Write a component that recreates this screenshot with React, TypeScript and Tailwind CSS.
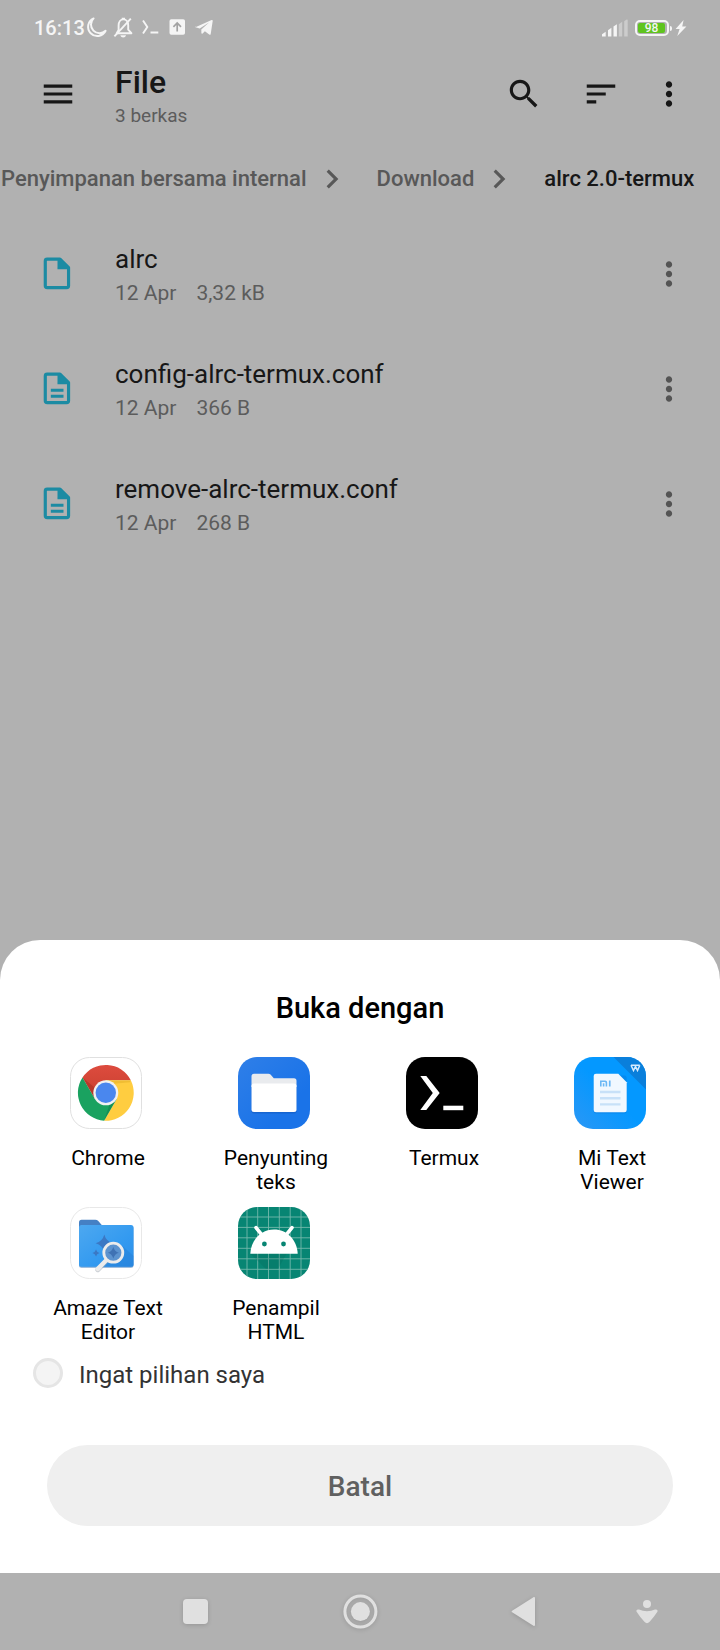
import type { ReactNode } from "react";

function MenuIcon() {
  return (
    <svg viewBox="0 0 24 24" className="size-[38px]" fill="currentColor" aria-hidden="true">
      <path d="M3 18h18v-2H3v2zm0-5h18v-2H3v2zm0-7v2h18V6H3z" />
    </svg>
  );
}

function SearchIcon() {
  return (
    <svg viewBox="0 0 24 24" className="size-[38px]" fill="currentColor" aria-hidden="true">
      <path d="M15.5 14h-.79l-.28-.27C15.41 12.59 16 11.11 16 9.5 16 5.91 13.09 3 9.5 3S3 5.91 3 9.5 5.91 16 9.5 16c1.61 0 3.09-.59 4.23-1.57l.27.28v.79l5 4.99L20.49 19l-4.99-5zm-6 0C7.01 14 5 11.99 5 9.5S7.01 5 9.5 5 14 7.01 14 9.5 11.99 14 9.5 14z" />
    </svg>
  );
}

function SortIcon() {
  return (
    <svg viewBox="0 0 24 24" className="size-[38px]" fill="currentColor" aria-hidden="true">
      <path d="M3 18h6v-2H3v2zM3 6v2h18V6H3zm0 7h12v-2H3v2z" />
    </svg>
  );
}

function MoreIcon() {
  return (
    <svg viewBox="0 0 24 24" className="size-[38px]" fill="currentColor" aria-hidden="true">
      <path d="M12 8c1.1 0 2-.9 2-2s-.9-2-2-2-2 .9-2 2 .9 2 2 2zm0 2c-1.1 0-2 .9-2 2s.9 2 2 2 2-.9 2-2-.9-2-2-2zm0 6c-1.1 0-2 .9-2 2s.9 2 2 2 2-.9 2-2-.9-2-2-2z" />
    </svg>
  );
}

function ChevronIcon() {
  return (
    <svg viewBox="0 0 24 24" className="size-[38px] shrink-0" fill="currentColor" aria-hidden="true">
      <path d="M10 6 8.59 7.41 13.17 12l-4.58 4.59L10 18l6-6z" />
    </svg>
  );
}

function FileIcon({ lines }: { lines: boolean }) {
  return (
    <svg viewBox="0 0 24 24" className="size-[38px] shrink-0 text-[#1c8ba3]" aria-hidden="true">
      <path
        d="M5.800 2.600h8.100L19.300 8v11.400q0 1.200-1.200 1.200H5.800q-1.200 0-1.200-1.200V3.800q0-1.200 1.200-1.200z"
        fill="none"
        stroke="currentColor"
        strokeWidth="2"
        strokeLinejoin="round"
      />
      <path d="M12.300 2.200h2l5.400 5.400V9h-7.400z" fill="currentColor" />
      {lines && <path d="M8.100 12.800h8M8.100 16.600h8" stroke="currentColor" strokeWidth="2" />}
    </svg>
  );
}

function StatusBar() {
  return (
    <div className="flex h-14 items-center justify-between pr-[33px] pl-[34px] text-[#f5f5f5]">
      <div className="flex items-center">
        <span className="text-xl font-medium leading-6">16:13</span>
        <div className="flex items-center gap-[3px]">
          <svg viewBox="0 0 24 24" className="size-6" fill="none" stroke="currentColor" strokeWidth="2" strokeLinejoin="round" aria-hidden="true">
            <path d="M8.600 2.400A9.200 9.200 0 1 0 20.600 14.800 8.400 8.400 0 0 1 8.600 2.400z" />
          </svg>
          <svg viewBox="0 0 24 24" className="size-6" fill="none" stroke="currentColor" strokeWidth="1.900" strokeLinejoin="round" aria-hidden="true">
            <path d="M4.700 17.200 6.600 14V9.500C6.600 6 8.600 3.400 11.400 3.400S16.200 6 16.200 9.500v4.200l3.200 3.500H4.700zM9.700 2.600h3.400" />
            <path d="M2.400 20.300 18.800 2.600" />
            <path d="M8.400 19.300H14c-.4 1.400-1.400 2.200-2.800 2.200s-2.400-.8-2.800-2.200z" fill="currentColor" stroke="none" />
          </svg>
          <svg viewBox="0 0 24 24" className="size-6" fill="none" stroke="currentColor" strokeWidth="1.900" aria-hidden="true">
            <path d="m4 4.500 4.300 6.500L4 17.500M11.500 16.500h7.800" />
          </svg>
          <svg viewBox="0 0 24 24" className="size-6" aria-hidden="true">
            <rect x="3.500" y="3.200" width="15.500" height="15.500" rx="1.800" fill="currentColor" />
            <path d="M11.200 15.500V7.500M7.400 10.800 11.200 7l3.800 3.800" fill="none" stroke="#a3a3a3" strokeWidth="1.700" />
          </svg>
          <svg viewBox="0 0 24 24" className="size-6" fill="currentColor" aria-hidden="true">
            <path d="M2.400 11.200 18.600 4c.8-.3 1.200.1 1.100.9l-2 13c-.2.900-.8 1.100-1.500.6l-4.300-3.300-2.300 2.300c-.6.600-1.100.4-1.200-.4l-.1-3.600 7.700-7-9.300 6-4.200-1.200c-.6-.2-.7-.8-.1-1.100z" />
          </svg>
        </div>
      </div>
      <div className="flex items-center">
        <svg viewBox="0 0 27 18" className="mr-[6px] h-[18px] w-[27px]" fill="currentColor" aria-hidden="true">
          <path d="M0 17.500v-2.200l3.700-2.600v4.800zM6 17.500v-6.300l3.400-2.400v8.700zM11.500 17.500V7.600l3.400-2.400v12.300z" />
          <path d="M16.800 17.500V5.200l3.400-2.500v14.800zM22.200 17.500V2.200l2-1.500q1.500-.6 1.500.6v16.200z" opacity=".4" />
        </svg>
        <div className="flex items-center gap-px">
          <div className="flex h-4 w-[34px] rounded-[5px] border-2 border-current p-px">
            <span className="flex w-[27px] items-center justify-center rounded-xs bg-[#5fc41f] text-xs font-medium leading-none">
              98
            </span>
          </div>
          <span className="h-[5px] w-[2px] rounded-r-sm bg-current" />
        </div>
        <svg viewBox="0 0 12 16" className="ml-[3px] h-4 w-3" fill="currentColor" aria-hidden="true">
          <path d="M8.600 0 .6 9h4L2.300 16 11.400 6.400H7.200z" />
        </svg>
      </div>
    </div>
  );
}

function IconButton({ label, children, className = "" }: { label: string; children: ReactNode; className?: string }) {
  return (
    <button type="button" aria-label={label} className={`shrink-0 ${className}`}>
      {children}
    </button>
  );
}

function Header() {
  return (
    <header className="flex h-[76px] items-center pr-8 pl-[39px] text-[#171717]">
      <IconButton label="Menu">
        <MenuIcon />
      </IconButton>
      <div className="ml-[38px] flex-1 pt-2">
        <h1 className="text-[32px] font-medium leading-9">File</h1>
        <p className="text-[19px] leading-8 text-[#5c5c5c]">3 berkas</p>
      </div>
      <div className="flex items-center">
        <IconButton label="Cari">
          <SearchIcon />
        </IconButton>
        <IconButton label="Urutkan" className="ml-[39px]">
          <SortIcon />
        </IconButton>
        <IconButton label="Opsi lainnya" className="ml-[30px]">
          <MoreIcon />
        </IconButton>
      </div>
    </header>
  );
}

function Breadcrumbs() {
  return (
    <nav aria-label="Lokasi" className="mt-6 flex h-[46px] items-center whitespace-nowrap pl-px text-[22px] font-medium leading-7 text-[#585858]">
      <a href="#internal">Penyimpanan bersama internal</a>
      <span className="mr-[26px] ml-[6px] flex">
        <ChevronIcon />
      </span>
      <a href="#download">Download</a>
      <span className="mr-[26px] ml-[6px] flex">
        <ChevronIcon />
      </span>
      <a href="#alrc" aria-current="page" className="text-[#171717]">
        alrc 2.0-termux
      </a>
    </nav>
  );
}

const files = [
  { name: "alrc", date: "12 Apr", size: "3,32 kB", lines: false },
  { name: "config-alrc-termux.conf", date: "12 Apr", size: "366 B", lines: true },
  { name: "remove-alrc-termux.conf", date: "12 Apr", size: "268 B", lines: true },
];

function FileList() {
  return (
    <ul className="mt-[14px]">
      {files.map((file) => (
        <li key={file.name} className="flex h-[115px] items-center pr-8 pl-[38px]">
          <FileIcon lines={file.lines} />
          <div className="ml-[39px] min-w-0 flex-1 pt-[6px]">
            <p className="truncate text-[26px] leading-8 text-[#171717]">{file.name}</p>
            <p className="flex gap-5 text-[21px] leading-9 text-[#5c5c5c]">
              <span>{file.date}</span>
              <span>{file.size}</span>
            </p>
          </div>
          <IconButton label={`Opsi ${file.name}`} className="text-[#545454]">
            <MoreIcon />
          </IconButton>
        </li>
      ))}
    </ul>
  );
}

function AppSvg({ children }: { children: ReactNode }) {
  return (
    <svg viewBox="0 0 72 72" className="mr-1 size-[72px]" aria-hidden="true">
      {children}
    </svg>
  );
}

function ChromeLogo() {
  return (
    <AppSvg>
      <defs>
        <linearGradient id="chrome-red" x1="0" y1="0" x2="0" y2="1">
          <stop offset="0" stopColor="#dd4b3e" />
          <stop offset="1" stopColor="#c8402f" />
        </linearGradient>
      </defs>
      <rect x=".5" y=".5" width="71" height="71" rx="19" fill="#fff" stroke="#e0e0e0" />
      <g transform="translate(35.800 35.800)">
        <path d="M-23.300-15.400A28 28 0 0 1 25-12.500L0-12.500 0 0-10.800 6.250z" fill="url(#chrome-red)" />
        <path d="M25-12.500A28 28 0 0 1-1.700 27.900L10.800 6.250 0 0 0-12.500z" fill="#ffcd40" />
        <path d="M-1.700 27.900A28 28 0 0 1-23.300-15.400L-10.800 6.250 0 0 10.800 6.250z" fill="#1aa260" />
        <path d="M0-12.500H25L24-10.500 8-9z" fill="#d9a520" opacity=".4" />
        <path d="M-1.700 27.900 10.800 6.250 4 11z" fill="#0d7a45" opacity=".45" />
        <path d="M-23.300-15.400-10.800 6.250-11-5z" fill="#96271b" opacity=".4" />
        <circle r="12.500" fill="#f1f1f1" />
        <circle r="10.200" fill="#4a87ee" />
      </g>
    </AppSvg>
  );
}

function FolderLogo() {
  return (
    <AppSvg>
      <defs>
        <linearGradient id="folder-bg" x1="0" y1="0" x2=".7" y2=".7">
          <stop offset="0" stopColor="#2f7fe8" />
          <stop offset="1" stopColor="#1a73e8" />
        </linearGradient>
      </defs>
      <rect width="72" height="72" rx="19" fill="url(#folder-bg)" />
      <rect x="13.500" y="28" width="45" height="28.500" rx="2.500" fill="#0f56b8" opacity=".5" />
      <path d="M13.500 30V19.200q0-2.500 2.500-2.500h14.500q1.200 0 2 .9l3.300 3.600H56q2.500 0 2.500 2.500V30z" fill="#e9ebee" />
      <rect x="13.500" y="26.500" width="45" height="28.500" rx="2.500" fill="#fff" />
    </AppSvg>
  );
}

function TermuxLogo() {
  return (
    <AppSvg>
      <rect width="72" height="72" rx="19" fill="#000" />
      <path d="M14.300 19h6L33.700 36 20.300 53h-6L26.800 36z" fill="#fff" />
      <rect x="37.300" y="48.700" width="20" height="4.500" fill="#fff" />
    </AppSvg>
  );
}

function MiTextLogo() {
  return (
    <AppSvg>
      <defs>
        <clipPath id="mi-clip">
          <rect width="72" height="72" rx="19" />
        </clipPath>
        <linearGradient id="mi-bg" x1="1" y1="0" x2="0" y2="1">
          <stop offset=".5" stopColor="#0498ff" />
          <stop offset="1" stopColor="#2b97f5" />
        </linearGradient>
      </defs>
      <g clipPath="url(#mi-clip)">
        <rect width="72" height="72" fill="url(#mi-bg)" />
        <path d="M39.500 0H72v32.500z" fill="#0a7fdb" />
        <path d="m57 8.200 2.500 5.300 2-4 2 4 2.300-5.300M57 8.200h8.800" fill="none" stroke="#d6ecff" strokeWidth="1.500" />
        <rect x="19.700" y="18.500" width="33" height="38" rx="2.500" fill="#0a6fd0" opacity=".35" />
        <path d="M22 16.700h22.300l8.400 8.600V53q0 2.300-2.300 2.300H22q-2.300 0-2.300-2.300V19q0-2.300 2.300-2.300z" fill="#f1f8ff" />
        <g fill="#6cb8f5">
          <path d="M26 29.500v-6h5.200q2 0 2 2v4h-1.600v-3.600q0-.8-.8-.8h-3.200v4.400z" />
          <rect x="28.800" y="26.300" width="1.600" height="3.200" />
          <rect x="34.900" y="23.500" width="1.700" height="6" />
        </g>
        <path d="M26 35h20.500M26 41.200h20.500M26 47.400h20.500" stroke="#c8e1f8" strokeWidth="2.400" />
      </g>
    </AppSvg>
  );
}

function AmazeLogo() {
  return (
    <AppSvg>
      <defs>
        <linearGradient id="amaze-front" x1="0" y1="0" x2="1" y2="1">
          <stop offset="0" stopColor="#4da8f0" />
          <stop offset=".6" stopColor="#339af0" />
          <stop offset="1" stopColor="#2c8ee8" />
        </linearGradient>
      </defs>
      <rect x=".5" y=".5" width="71" height="71" rx="19" fill="#fff" stroke="#e8e8e8" />
      <path d="M9 30V15.200q0-2.500 2.500-2.500h13.800q1.800 0 3 1.300l5.200 6V30z" fill="#4580c4" />
      <rect x="9" y="19" width="54.500" height="41.700" rx="2.500" fill="#2b6fb8" opacity=".6" />
      <rect x="9" y="18" width="54.500" height="41.700" rx="2.500" fill="url(#amaze-front)" />
      <path d="M52 38.500 63.500 49v8.200q0 2.500-2.500 2.500H34z" fill="#2378cf" opacity=".35" />
      <path d="M34.300 27.500q1.700 6.800 8.700 8.800-7 2-8.700 8.800-1.700-6.800-8.700-8.800 7-2 8.700-8.800z" fill="#3b78c4" />
      <path d="M26 42.500q.8 2.700 3.500 3.500-2.700.8-3.500 3.500-.8-2.700-3.500-3.500 2.700-.8 3.500-3.500z" fill="#3b78c4" />
      <path d="M36 54.200 27.800 62.700" stroke="#9aa3ad" strokeWidth="5" strokeLinecap="round" opacity=".5" />
      <path d="M36 53.500 27.800 61.900" stroke="#ececec" strokeWidth="4.400" strokeLinecap="round" />
      <circle cx="43.300" cy="45.700" r="9.500" fill="#5c93cf" stroke="#ececec" strokeWidth="2.800" />
      <path d="M43.300 40q1.300 4.500 5.500 5.700-4.200 1.200-5.500 5.700-1.300-4.500-5.500-5.700 4.200-1.200 5.500-5.700z" fill="#3f72b4" />
    </AppSvg>
  );
}

function AndroidLogo() {
  return (
    <AppSvg>
      <defs>
        <clipPath id="android-clip">
          <rect width="72" height="72" rx="19" />
        </clipPath>
      </defs>
      <g clipPath="url(#android-clip)">
        <rect width="72" height="72" fill="#078573" />
        <path
          d="M9 0v72M19.700 0v72M30.500 0v72M41.300 0v72M52.200 0v72M63 0v72M0 10h72M0 20.400h72M0 30.800h72M0 41.300h72M0 51.800h72M0 62.300h72"
          stroke="#74b8ac"
          strokeWidth=".9"
        />
        <path d="M12.500 46.700h36L40 62H28z" fill="#05604f" opacity=".2" />
        <path d="M12.300 46.700C13 33 23 22.600 36 22.600S59 33 59.700 46.700z" fill="#fff" />
        <path d="m18 20.600 6.500 8M54 20.600l-6.500 8" stroke="#fff" strokeWidth="3.600" strokeLinecap="round" />
        <circle cx="26.400" cy="37" r="2.400" fill="#078573" />
        <circle cx="45.500" cy="37" r="2.400" fill="#078573" />
      </g>
    </AppSvg>
  );
}

const apps = [
  { name: "Chrome", logo: <ChromeLogo /> },
  { name: "Penyunting teks", logo: <FolderLogo /> },
  { name: "Termux", logo: <TermuxLogo /> },
  { name: "Mi Text Viewer", logo: <MiTextLogo /> },
  { name: "Amaze Text Editor", logo: <AmazeLogo /> },
  { name: "Penampil HTML", logo: <AndroidLogo /> },
];

function OpenWithSheet() {
  return (
    <section role="dialog" aria-labelledby="sheet-title" className="rounded-t-[40px] bg-white pt-[50px] pb-[47px]">
      <h2 id="sheet-title" className="text-center text-[29px] font-medium leading-9 text-black">
        Buka dengan
      </h2>
      <div className="mt-[31px] grid grid-cols-4 px-6">
        {apps.map((app) => (
          <button key={app.name} type="button" className="flex h-[150px] flex-col items-center">
            {app.logo}
            <span className="mt-[17px] w-[120px] text-center text-[21px] leading-6 text-black">{app.name}</span>
          </button>
        ))}
      </div>
      <div className="flex h-8 items-center pl-[33px]">
        <input
          id="remember"
          type="checkbox"
          className="size-[30px] appearance-none rounded-full border-3 border-[#e5e5e5] bg-[#f4f4f4] checked:bg-[#1a73e8]"
        />
        <label htmlFor="remember" className="pt-1 pl-4 text-2xl leading-8 text-[#333]">
          Ingat pilihan saya
        </label>
      </div>
      <div className="mt-14 px-[47px]">
        <button type="button" className="h-[81px] w-full rounded-full bg-[#efefef] pt-[2px] text-[28px] font-medium text-[#606060]">
          Batal
        </button>
      </div>
    </section>
  );
}

function NavigationBar() {
  return (
    <nav aria-label="Navigasi sistem" className="grid h-[77px] grid-cols-[1fr_164px_164px_164px_1fr] items-center justify-items-center text-[#e0e0e0]">
      <span />
      <IconButton label="Aplikasi terbaru">
        <svg viewBox="0 0 40 40" className="size-10 drop-shadow-sm" fill="currentColor" aria-hidden="true">
          <rect x="7" y="7" width="25" height="25" rx="4" />
        </svg>
      </IconButton>
      <IconButton label="Beranda">
        <svg viewBox="0 0 40 40" className="size-10 drop-shadow-sm" aria-hidden="true">
          <circle cx="20.400" cy="19.600" r="15.500" fill="none" stroke="currentColor" strokeWidth="3" />
          <circle cx="20.400" cy="19.600" r="9.500" fill="currentColor" />
        </svg>
      </IconButton>
      <IconButton label="Kembali">
        <svg viewBox="0 0 40 40" className="size-10 drop-shadow-sm" fill="currentColor" stroke="currentColor" strokeWidth="2" strokeLinejoin="round" aria-hidden="true">
          <path d="M8.700 19.500 30 6v27z" />
        </svg>
      </IconButton>
      <IconButton label="Sembunyikan" className="pr-8">
        <svg viewBox="0 0 40 40" className="size-10" fill="currentColor" aria-hidden="true">
          <circle cx="20" cy="12" r="4" />
          <path d="M12 17.600q3.600 1.700 8 1.700t8-1.700c2-.7 3.300 1 2.200 2.500q-3.600 5.600-7.600 9.700-2.600 2.800-5.200 0-4-4.100-7.600-9.700c-1.100-1.500.2-3.200 2.200-2.500z" />
        </svg>
      </IconButton>
    </nav>
  );
}

export default function App() {
  return (
    <div className="flex min-h-screen flex-col overflow-x-hidden bg-[#b1b1b1] font-[Roboto,sans-serif]">
      <StatusBar />
      <Header />
      <Breadcrumbs />
      <main className="flex-1">
        <FileList />
      </main>
      <OpenWithSheet />
      <NavigationBar />
    </div>
  );
}
